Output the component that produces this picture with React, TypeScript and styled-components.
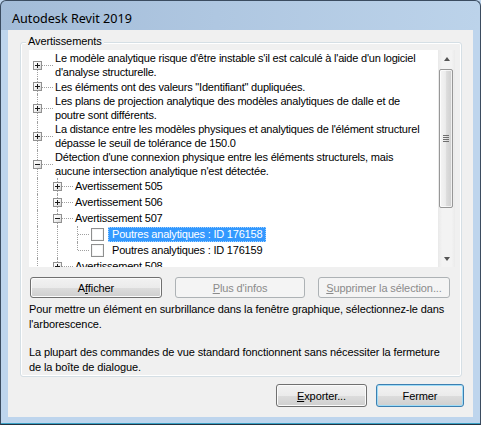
import React from 'react';
import styled, { createGlobalStyle, css } from 'styled-components';

const Global = createGlobalStyle`
  html, body { margin: 0; padding: 0; background: #bed5ed; overflow: hidden; }
  #root { width: 481px; height: 425px; }
`;

const Window = styled.div`
  box-sizing: border-box;
  width: 481px;
  height: 425px;
  border: 1px solid #3b4c60;
  border-bottom-color: #26323f;
  border-radius: 6px 6px 0 0;
  background: linear-gradient(to right, #a3bcd8 0%, #afc7e1 45%, #bcd3ea 100%) top / 100% 29px no-repeat, #bed5ed;
  box-shadow: inset 0 -1px 0 #3aa2c6;
  display: flex;
  flex-direction: column;
  padding: 0 7px 7px 7px;
  font-family: "Liberation Sans", Arial, sans-serif;
  font-size: 11px;
  color: #000;
`;

const TitleBar = styled.div`
  height: 29px;
  box-sizing: border-box;
  padding: 10px 0 0 4px;
  font-family: "Noto Sans", "Open Sans", sans-serif;
  font-size: 12.6px;
  line-height: 16px;
  color: #000;
`;

const Client = styled.div`
  flex: 1;
  background: #f0f0f0;
  display: flex;
  flex-direction: column;
  padding: 12px 9px 10px 12px;
  box-sizing: border-box;
`;

const GroupBox = styled.div`
  position: relative;
  box-sizing: border-box;
  height: 335px;
  margin-right: 2px;
  border: 1px solid #d5dfe5;
  border-radius: 3px;
  box-shadow: inset 0 0 0 1px #ffffff;
  padding: 7px 6px 1px 8px;
  display: flex;
  flex-direction: column;
`;

const Legend = styled.div`
  position: absolute;
  top: -9px;
  left: 5px;
  padding: 0 2px;
  background: #f0f0f0;
  line-height: 14px;
  letter-spacing: -0.1px;
`;

const Tree = styled.div`
  height: 217px;
  display: flex;
  background: #fff;
  flex: none;
`;

const TreeContent = styled.div`
  flex: 1;
  overflow: hidden;
  padding-top: 1px;
  letter-spacing: -0.2px;
`;

const Row = styled.div<{ $h: number }>`
  display: flex;
  height: ${(p) => p.$h}px;
  align-items: stretch;
`;

const dotted = '1px dotted #a0a0a0';

const Guide = styled.div<{ $on: boolean }>`
  width: 20px;
  flex: none;
  position: relative;
  ${(p) =>
    p.$on &&
    css`
      &::before {
        content: '';
        position: absolute;
        left: 8px;
        top: 0;
        bottom: 0;
        border-left: ${dotted};
      }
    `}
`;

const Connector = styled.div<{ $w: number; $up: boolean; $down: boolean }>`
  width: ${(p) => p.$w}px;
  flex: none;
  position: relative;
  display: flex;
  align-items: center;
  &::before {
    content: '';
    position: absolute;
    left: 8px;
    top: ${(p) => (p.$up ? '0' : '50%')};
    bottom: ${(p) => (p.$down ? '0' : '50%')};
    border-left: ${dotted};
  }
  &::after {
    content: '';
    position: absolute;
    left: 9px;
    right: 0;
    top: 50%;
    border-top: ${dotted};
  }
`;

const Expander = styled.span<{ $open: boolean }>`
  position: relative;
  z-index: 1;
  box-sizing: border-box;
  margin-left: 4px;
  width: 9px;
  height: 9px;
  border: 1px solid #919191;
  background: linear-gradient(135deg, #ffffff 0%, #f2f2f2 50%, #d4d4d4 100%);
  &::before {
    content: '';
    position: absolute;
    left: 1px;
    top: 3px;
    width: 5px;
    height: 1px;
    background: #1a1a1a;
  }
  ${(p) =>
    !p.$open &&
    css`
      &::after {
        content: '';
        position: absolute;
        left: 3px;
        top: 1px;
        width: 1px;
        height: 5px;
        background: #1a1a1a;
      }
    `}
`;

const ItemText = styled.div`
  margin-left: 2px;
  line-height: 14px;
  white-space: nowrap;
  align-self: center;
`;

const CheckBox = styled.span`
  flex: none;
  align-self: center;
  box-sizing: border-box;
  width: 13px;
  height: 13px;
  margin-left: 2px;
  margin-right: 4px;
  border: 1px solid #8e8f8f;
  background: #fff;
  box-shadow: inset 0 0 0 1px #f4f4f4;
`;

const LeafLabel = styled.span<{ $selected: boolean }>`
  align-self: center;
  height: 15px;
  line-height: 15px;
  padding: 0 4px;
  white-space: nowrap;
  box-sizing: border-box;
  ${(p) =>
    p.$selected &&
    css`
      background: #3399ff;
      color: #fff;
      outline: 1px dotted rgba(255, 255, 255, 0.55);
      outline-offset: -1px;
    `}
`;

const ScrollBar = styled.div`
  width: 17px;
  flex: none;
  display: flex;
  flex-direction: column;
  background: linear-gradient(to right, #e9e9e9 0%, #f3f3f3 25%, #f3f3f3 80%, #ebebeb 100%);
`;

const ScrollArrow = styled.div<{ $dir: 'up' | 'down' }>`
  height: 17px;
  flex: none;
  display: flex;
  align-items: center;
  justify-content: center;
  &::before {
    content: '';
    width: 0;
    height: 0;
    border-left: 3.5px solid transparent;
    border-right: 3.5px solid transparent;
    ${(p) =>
      p.$dir === 'up'
        ? css`border-bottom: 4px solid #555;`
        : css`border-top: 4px solid #555;`}
  }
`;

const Track = styled.div`
  flex: 1;
  padding: 2px 2px 0 1px;
`;

const Thumb = styled.div`
  box-sizing: border-box;
  height: 139px;
  border: 1px solid #979797;
  border-radius: 2px;
  background: linear-gradient(to right, #f4f4f4 0%, #ececec 45%, #dcdcdc 55%, #cfcfcf 100%);
  box-shadow: inset 0 0 0 1px rgba(255, 255, 255, 0.7);
  display: flex;
  align-items: center;
  justify-content: center;
`;

const Grip = styled.span`
  width: 6px;
  height: 7px;
  background: repeating-linear-gradient(to bottom, #6f6f6f 0 1px, transparent 1px 2px);
`;

const ButtonRow = styled.div`
  display: flex;
  gap: 13px;
  margin-top: 10px;
  padding-left: 1px;
`;

const Button = styled.button<{ $w: number; $h: number; $default?: boolean }>`
  width: ${(p) => p.$w}px;
  height: ${(p) => p.$h}px;
  flex: none;
  box-sizing: border-box;
  padding: 0;
  font-family: "Liberation Sans", Arial, sans-serif;
  font-size: 11px;
  font-weight: 400;
  letter-spacing: -0.1px;
  color: #000;
  border: 1px solid #707070;
  border-radius: 3px;
  background: linear-gradient(to bottom, #f2f2f2 0%, #ebebeb 50%, #dddddd 50%, #cfcfcf 100%);
  box-shadow: inset 0 0 0 1px #fbfbfb;
  ${(p) =>
    p.$default &&
    css`
      border-color: #3c7fb1;
      box-shadow: inset 0 0 0 1px #9fdcf7;
    `}
  &:disabled {
    color: #8b8b8b;
    border-color: #adb2b5;
    background: #f4f4f4;
    box-shadow: none;
  }
  u { text-decoration: underline; text-underline-offset: 1px; }
`;

const Para = styled.p<{ $top: number }>`
  margin: ${(p) => p.$top}px 0 0 0;
  line-height: 15px;
  letter-spacing: -0.1px;
`;

const BottomBar = styled.div`
  display: flex;
  justify-content: flex-end;
  gap: 9px;
  margin-top: 7px;
`;

type Item = {
  level: number;
  h: number;
  lines?: string[];
  open?: boolean;
  leaf?: string;
  selected?: boolean;
  guides: boolean[];
  up: boolean;
  down: boolean;
};

const items: Item[] = [
  {
    level: 0, h: 28, guides: [], up: false, down: true,
    lines: ["Le modèle analytique risque d'être instable s'il est calculé à l'aide d'un logiciel", "d'analyse structurelle."],
  },
  { level: 0, h: 15, guides: [], up: true, down: true, lines: ['Les éléments ont des valeurs "Identifiant" dupliquées.'] },
  {
    level: 0, h: 28, guides: [], up: true, down: true,
    lines: ['Les plans de projection analytique des modèles analytiques de dalle et de', 'poutre sont différents.'],
  },
  {
    level: 0, h: 28, guides: [], up: true, down: true,
    lines: ["La distance entre les modèles physiques et analytiques de l'élément structurel", 'dépasse le seuil de tolérance de 150.0'],
  },
  {
    level: 0, h: 28, guides: [], up: true, down: true, open: true,
    lines: ["Détection d'une connexion physique entre les éléments structurels, mais", "aucune intersection analytique n'est détectée."],
  },
  { level: 1, h: 16, guides: [true], up: true, down: true, lines: ['Avertissement 505'] },
  { level: 1, h: 16, guides: [true], up: true, down: true, lines: ['Avertissement 506'] },
  { level: 1, h: 16, guides: [true], up: true, down: true, open: true, lines: ['Avertissement 507'] },
  { level: 2, h: 16, guides: [true, true], up: true, down: true, leaf: 'Poutres analytiques : ID 176158', selected: true },
  { level: 2, h: 16, guides: [true, true], up: true, down: false, leaf: 'Poutres analytiques : ID 176159' },
  { level: 1, h: 16, guides: [true], up: true, down: true, lines: ['Avertissement 508'] },
];

function TreeRow({ item }: { item: Item }) {
  return (
    <Row $h={item.h}>
      {item.guides.map((g, i) => (
        <Guide key={i} $on={g} />
      ))}
      {item.leaf ? (
        <>
          <Connector $w={20} $up={item.up} $down={item.down} />
          <CheckBox />
          <LeafLabel $selected={!!item.selected}>{item.leaf}</LeafLabel>
        </>
      ) : (
        <>
          <Connector $w={24} $up={item.up} $down={item.down}>
            <Expander $open={!!item.open} />
          </Connector>
          <ItemText>
            {item.lines!.map((l, i) => (
              <div key={i}>{l}</div>
            ))}
          </ItemText>
        </>
      )}
    </Row>
  );
}

export default function App() {
  return (
    <>
      <Global />
      <Window>
        <TitleBar>Autodesk Revit 2019</TitleBar>
        <Client>
          <GroupBox>
            <Legend>Avertissements</Legend>
            <Tree>
              <TreeContent>
                {items.map((it, i) => (
                  <TreeRow key={i} item={it} />
                ))}
              </TreeContent>
              <ScrollBar>
                <ScrollArrow $dir="up" />
                <Track>
                  <Thumb>
                    <Grip />
                  </Thumb>
                </Track>
                <ScrollArrow $dir="down" />
              </ScrollBar>
            </Tree>
            <ButtonRow>
              <Button $w={132} $h={21}>
                A<u>f</u>ficher
              </Button>
              <Button $w={130} $h={21} disabled>
                <u>P</u>lus d'infos
              </Button>
              <Button $w={132} $h={21} disabled>
                <u>S</u>upprimer la sélection...
              </Button>
            </ButtonRow>
            <Para $top={4}>
              Pour mettre un élément en surbrillance dans la fenêtre graphique, sélectionnez-le dans
              <br />
              l'arborescence.
            </Para>
            <Para $top={13}>
              La plupart des commandes de vue standard fonctionnent sans nécessiter la fermeture
              <br />
              de la boîte de dialogue.
            </Para>
          </GroupBox>
          <BottomBar>
            <Button $w={91} $h={23}>
              <u>E</u>xporter...
            </Button>
            <Button $w={88} $h={23} $default>
              Fermer
            </Button>
          </BottomBar>
        </Client>
      </Window>
    </>
  );
}
